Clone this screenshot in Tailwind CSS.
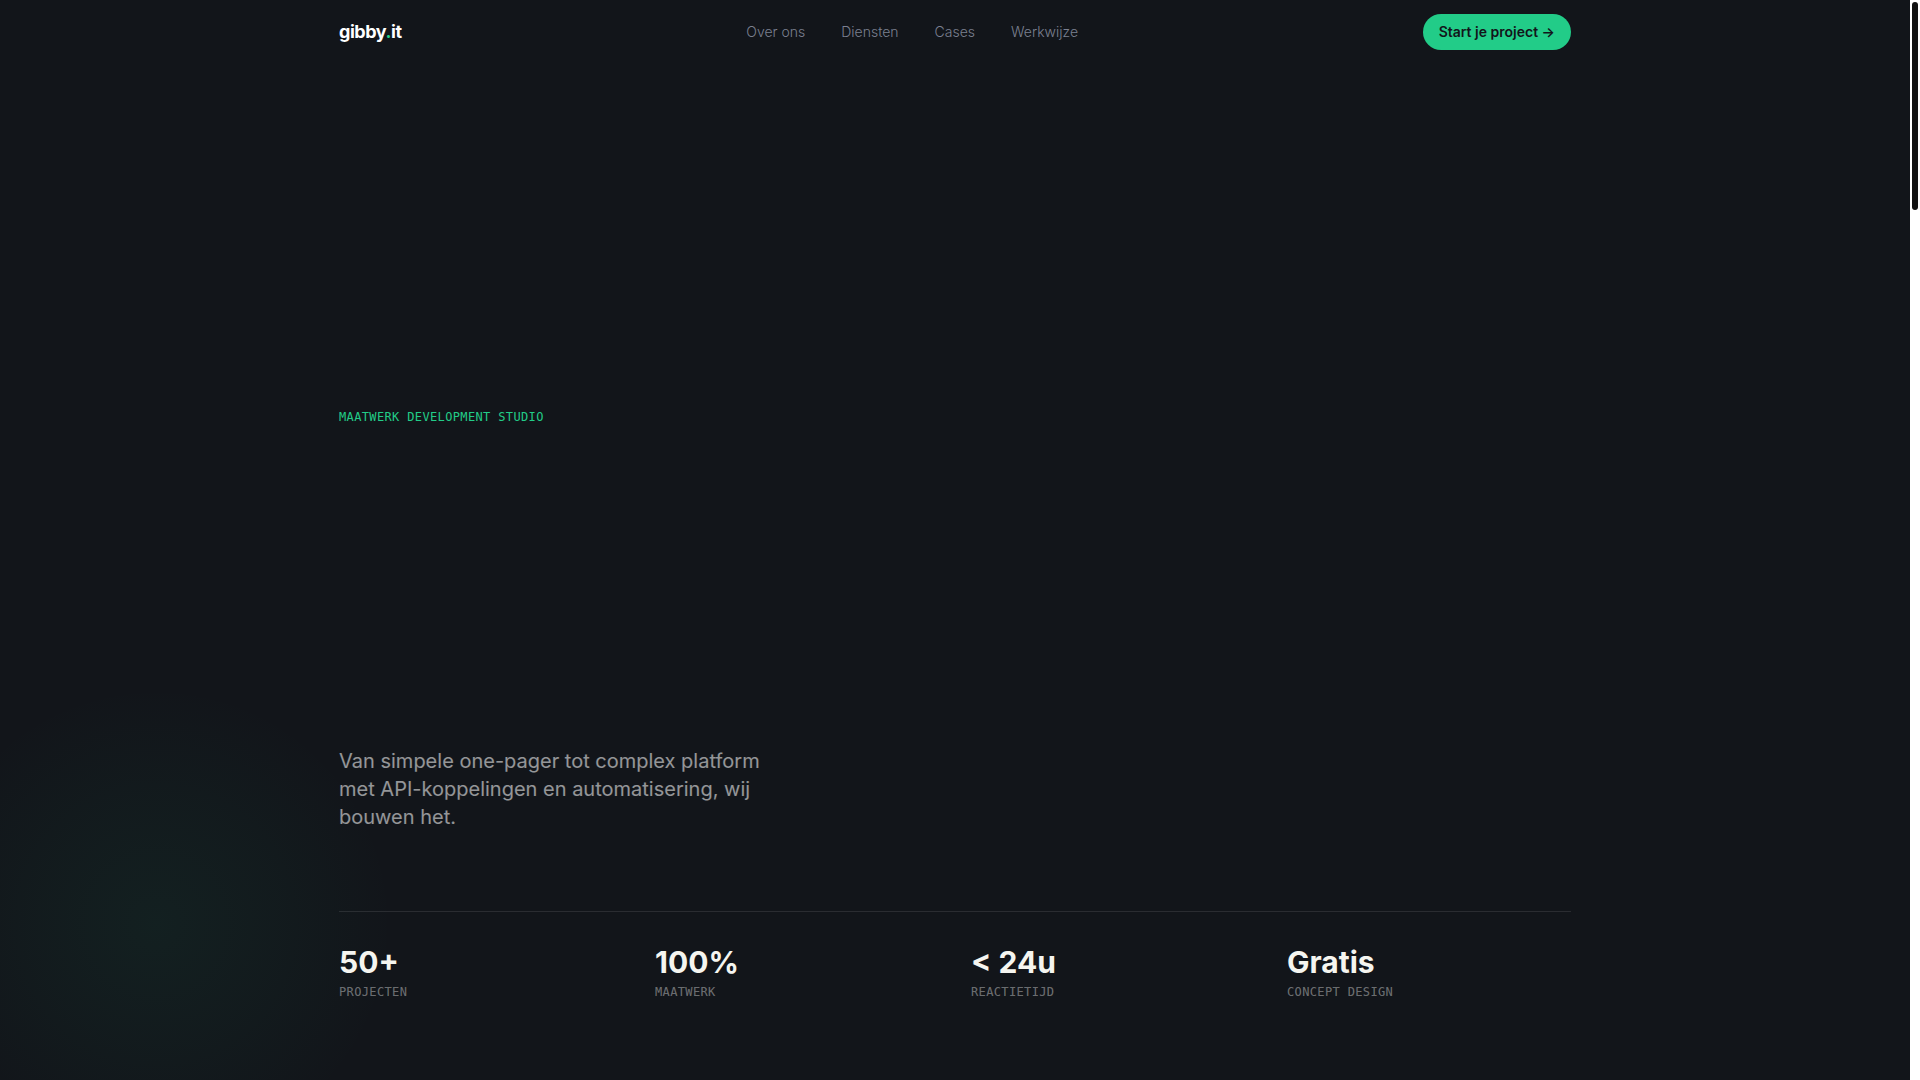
<!DOCTYPE html>
<html lang="nl">

<head>
  <meta charset="utf-8" />
  <meta name="viewport" content="width=device-width, initial-scale=1" />
  <title>gibby.it</title>

  <!-- Style -->
  <script src="https://cdn.jsdelivr.net/npm/@tailwindcss/browser@4"></script>
</head>

<body class="flex min-h-screen bg-[#12151a] font-['Inter',sans-serif] text-[#f5f5f0]">
  <div class="relative flex min-h-screen flex-1 flex-col overflow-hidden">
    <!-- Glow -->
    <div class="pointer-events-none absolute -bottom-26 -left-26 size-[520px] bg-radial from-[#22cc88]/6 via-[#22cc88]/3 via-35% to-transparent to-65%"></div>

    <header class="relative">
      <nav class="mx-auto flex h-16 w-full max-w-7xl items-center justify-between px-6">
        <a href="#" class="text-lg font-bold tracking-tight text-white">gibby<span class="text-[#22cc88]">.</span>it</a>
        <div class="flex items-center gap-9 text-sm font-light text-[#7b8090]">
          <a href="#over-ons">Over ons</a>
          <a href="#diensten">Diensten</a>
          <a href="#cases">Cases</a>
          <a href="#werkwijze">Werkwijze</a>
        </div>
        <button type="button" class="h-9 rounded-full bg-[#22cc88] px-4 text-sm font-semibold text-[#12151a]">Start je project →</button>
      </nav>
    </header>

    <main class="relative mx-auto flex w-full max-w-7xl flex-1 flex-col justify-end px-6 pb-20">
      <p class="font-['DejaVu_Sans_Mono',monospace] text-xs leading-5 tracking-[0.03em] text-[#22cc88] uppercase">Maatwerk development studio</p>
      <p class="mt-80 max-w-md text-xl leading-7 text-white/55">Van simpele one-pager tot complex platform met API-koppelingen en automatisering, wij bouwen het.</p>

      <dl class="mt-20 grid grid-cols-4 gap-8 border-t border-white/10 pt-8">
        <div class="flex flex-col-reverse gap-1">
          <dt class="font-['DejaVu_Sans_Mono',monospace] text-xs tracking-[0.03em] text-white/40 uppercase">Projecten</dt>
          <dd class="text-3xl font-bold">50+</dd>
        </div>
        <div class="flex flex-col-reverse gap-1">
          <dt class="font-['DejaVu_Sans_Mono',monospace] text-xs tracking-[0.03em] text-white/40 uppercase">Maatwerk</dt>
          <dd class="text-3xl font-bold">100%</dd>
        </div>
        <div class="flex flex-col-reverse gap-1">
          <dt class="font-['DejaVu_Sans_Mono',monospace] text-xs tracking-[0.03em] text-white/40 uppercase">Reactietijd</dt>
          <dd class="text-3xl font-bold">&lt; 24u</dd>
        </div>
        <div class="flex flex-col-reverse gap-1">
          <dt class="font-['DejaVu_Sans_Mono',monospace] text-xs tracking-[0.03em] text-white/40 uppercase">Concept design</dt>
          <dd class="text-3xl font-bold">Gratis</dd>
        </div>
      </dl>
    </main>
  </div>

  <!-- Scrollbar -->
  <div class="w-[10px] shrink-0 bg-white p-[2px]">
    <div class="h-52 rounded-full bg-[#111111]"></div>
  </div>
</body>

</html>
